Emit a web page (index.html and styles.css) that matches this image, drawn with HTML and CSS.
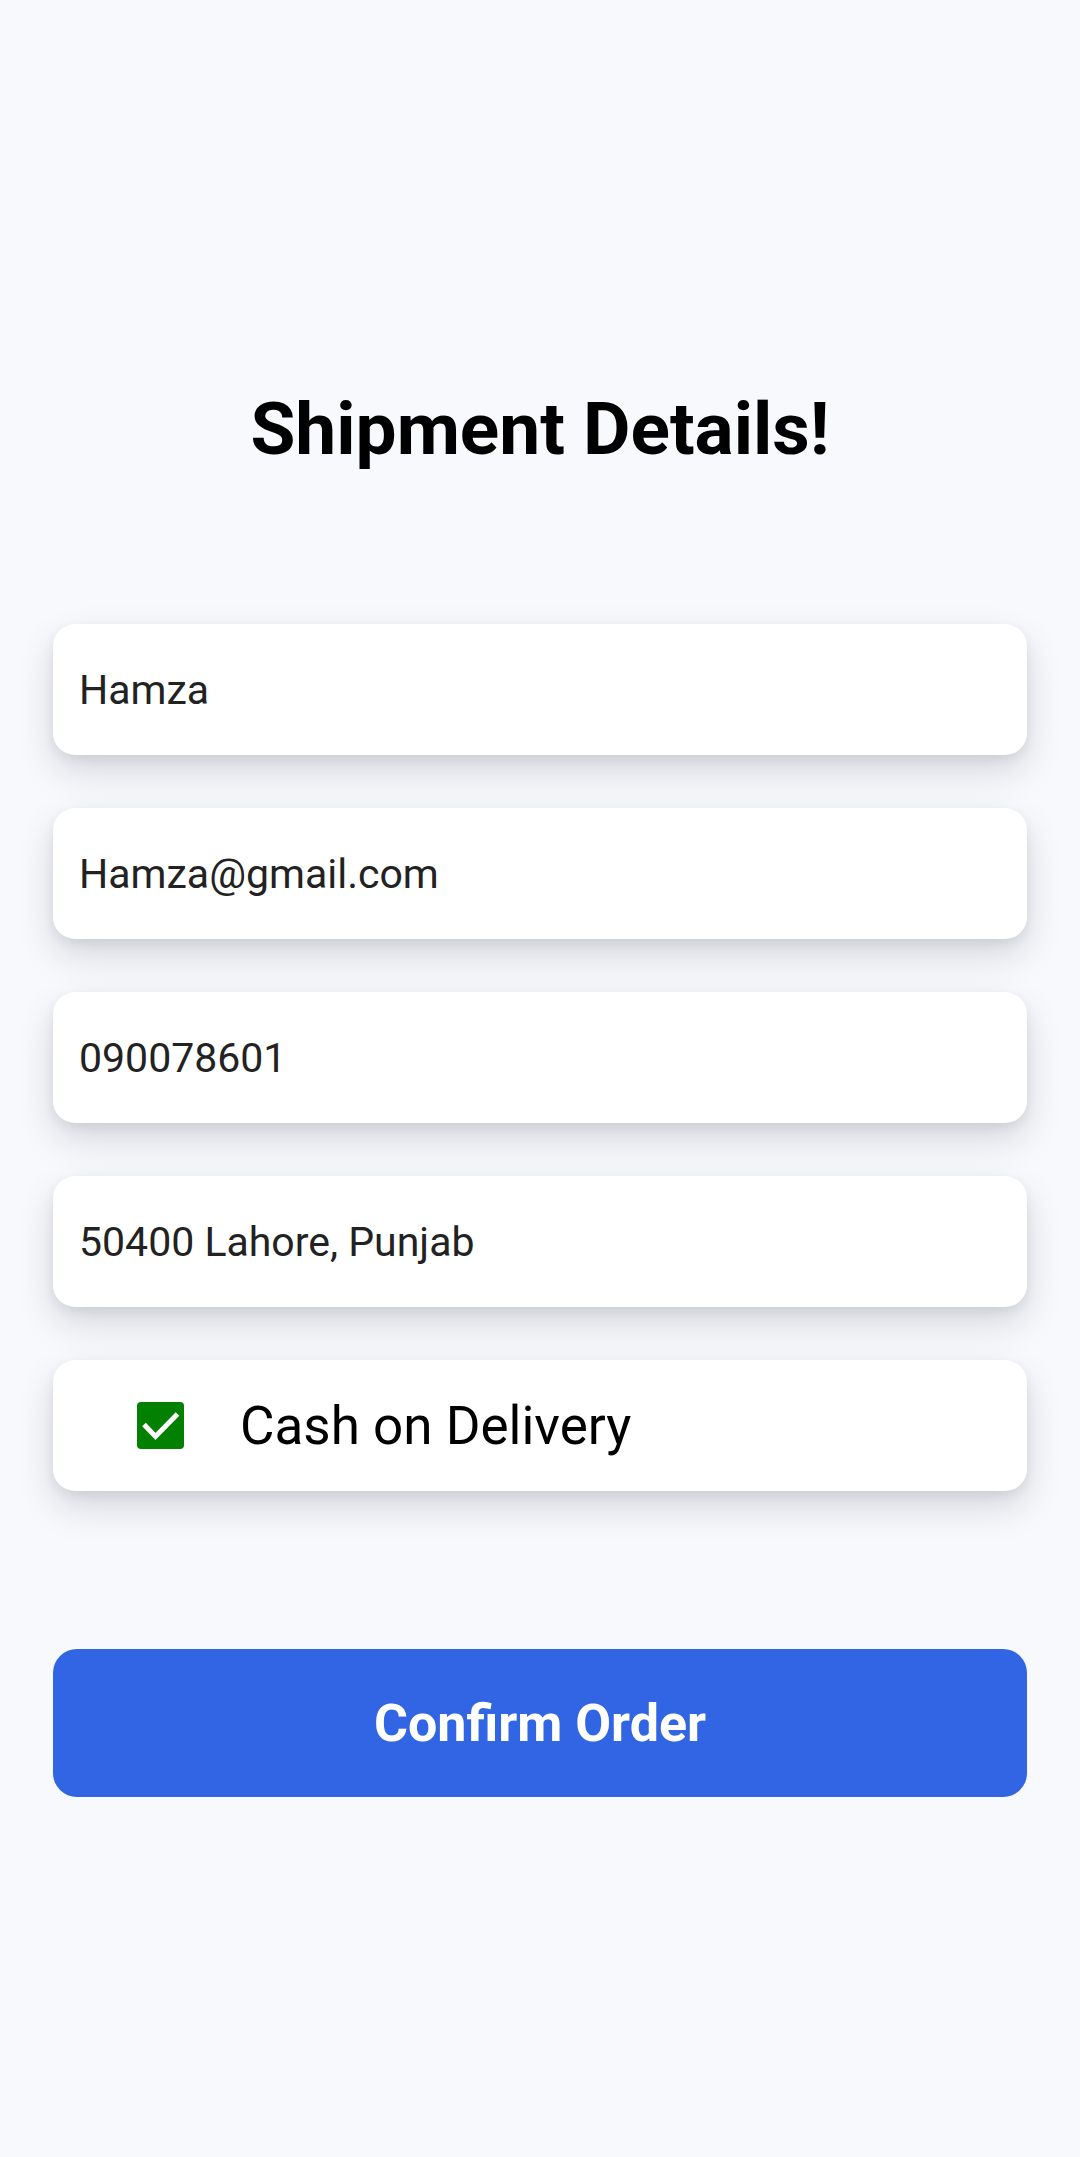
FILE: index.html
```html
<!DOCTYPE html>
<html lang="en">
<head>
<meta charset="utf-8">
<title>Shipment Details</title>
<link rel="stylesheet" href="styles.css">
</head>
<body>
<main class="screen">
  <h1 class="title">Shipment Details!</h1>
  <div class="fields">
    <div class="field">Hamza</div>
    <div class="field">Hamza@gmail.com</div>
    <div class="field">090078601</div>
    <div class="field">50400 Lahore, Punjab</div>
    <div class="field field-check">
      <span class="checkbox">
        <svg viewBox="0 0 47 47" width="47" height="47">
          <rect x="0" y="0" width="47" height="47" rx="4" fill="#018001"/>
          <path d="M7 22.5 L18.5 34.5 L40.5 12" fill="none" stroke="#ffffff" stroke-width="5"/>
        </svg>
      </span>
      <span class="check-label">Cash on Delivery</span>
    </div>
  </div>
  <button class="confirm">Confirm Order</button>
</main>
</body>
</html>
```

FILE: styles.css
```css
html, body {
  margin: 0;
  padding: 0;
  background: #f8f9fd;
}

body {
  font-family: Roboto, "Noto Sans", "Liberation Sans", sans-serif;
  width: 1080px;
  min-height: 2157px;
}

.screen {
  display: flex;
  flex-direction: column;
  padding: 392px 53px 0 53px;
}

.title {
  margin: 0;
  font-size: 73px;
  line-height: 75px;
  font-weight: 700;
  color: #000000;
  text-align: center;
}

.fields {
  margin-top: 157px;
  display: flex;
  flex-direction: column;
  gap: 53px;
}

.field {
  height: 131px;
  box-sizing: border-box;
  background: #ffffff;
  border-radius: 22px;
  display: flex;
  align-items: center;
  padding-left: 26px;
  font-size: 41px;
  color: #222222;
  box-shadow: 0 16px 36px rgba(20, 24, 40, 0.15), 0 5px 12px rgba(20, 24, 40, 0.07);
}

.field-check {
  padding-left: 84px;
  gap: 56px;
}

.checkbox {
  display: flex;
  width: 47px;
  height: 47px;
  flex: none;
}

.check-label {
  font-size: 53px;
  color: #000000;
}

.confirm {
  margin-top: 158px;
  height: 148px;
  border: none;
  border-radius: 24px;
  background: #3165e3;
  color: #ffffff;
  font-family: Roboto, "Noto Sans", "Liberation Sans", sans-serif;
  font-size: 52px;
  font-weight: 700;
  padding: 0;
}
```
